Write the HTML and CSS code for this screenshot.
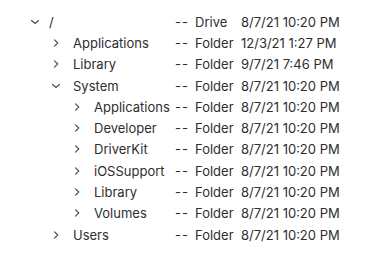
FILE: index.html
```html
<!DOCTYPE html>
<html>
<head>
<meta charset="utf-8">
<link rel="stylesheet" href="styles.css">
</head>
<body>
<ul class="tree">
  <li class="row l0"><span class="name"><svg class="chev" viewBox="0 0 10 10"><polyline points="1.5,3.5 5,6.5 8.5,3.5"/></svg><span class="label">/</span></span><span class="dash">--</span><span class="type">Drive</span><span class="date">8/7/21 10:20 PM</span></li>
  <li class="row l1"><span class="name"><svg class="chev" viewBox="0 0 10 10"><polyline points="3.5,1.8 6.8,5 3.5,8.2"/></svg><span class="label">Applications</span></span><span class="dash">--</span><span class="type">Folder</span><span class="date">12/3/21 1:27 PM</span></li>
  <li class="row l1"><span class="name"><svg class="chev" viewBox="0 0 10 10"><polyline points="3.5,1.8 6.8,5 3.5,8.2"/></svg><span class="label">Library</span></span><span class="dash">--</span><span class="type">Folder</span><span class="date">9/7/21 7:46 PM</span></li>
  <li class="row l1"><span class="name"><svg class="chev" viewBox="0 0 10 10"><polyline points="1.5,3.5 5,6.5 8.5,3.5"/></svg><span class="label">System</span></span><span class="dash">--</span><span class="type">Folder</span><span class="date">8/7/21 10:20 PM</span></li>
  <li class="row l2"><span class="name"><svg class="chev" viewBox="0 0 10 10"><polyline points="3.5,1.8 6.8,5 3.5,8.2"/></svg><span class="label">Applications</span></span><span class="dash">--</span><span class="type">Folder</span><span class="date">8/7/21 10:20 PM</span></li>
  <li class="row l2"><span class="name"><svg class="chev" viewBox="0 0 10 10"><polyline points="3.5,1.8 6.8,5 3.5,8.2"/></svg><span class="label">Developer</span></span><span class="dash">--</span><span class="type">Folder</span><span class="date">8/7/21 10:20 PM</span></li>
  <li class="row l2"><span class="name"><svg class="chev" viewBox="0 0 10 10"><polyline points="3.5,1.8 6.8,5 3.5,8.2"/></svg><span class="label">DriverKit</span></span><span class="dash">--</span><span class="type">Folder</span><span class="date">8/7/21 10:20 PM</span></li>
  <li class="row l2"><span class="name"><svg class="chev" viewBox="0 0 10 10"><polyline points="3.5,1.8 6.8,5 3.5,8.2"/></svg><span class="label">iOSSupport</span></span><span class="dash">--</span><span class="type">Folder</span><span class="date">8/7/21 10:20 PM</span></li>
  <li class="row l2"><span class="name"><svg class="chev" viewBox="0 0 10 10"><polyline points="3.5,1.8 6.8,5 3.5,8.2"/></svg><span class="label">Library</span></span><span class="dash">--</span><span class="type">Folder</span><span class="date">8/7/21 10:20 PM</span></li>
  <li class="row l2"><span class="name"><svg class="chev" viewBox="0 0 10 10"><polyline points="3.5,1.8 6.8,5 3.5,8.2"/></svg><span class="label">Volumes</span></span><span class="dash">--</span><span class="type">Folder</span><span class="date">8/7/21 10:20 PM</span></li>
  <li class="row l1"><span class="name"><svg class="chev" viewBox="0 0 10 10"><polyline points="3.5,1.8 6.8,5 3.5,8.2"/></svg><span class="label">Users</span></span><span class="dash">--</span><span class="type">Folder</span><span class="date">8/7/21 10:20 PM</span></li>
</ul>
</body>
</html>
```
FILE: styles.css
```css
html, body {
  margin: 0;
  padding: 0;
  background: #ffffff;
}
body {
  font-family: Inter, "Noto Sans", sans-serif;
  font-size: 13px;
  color: #2e2e2e;
}
.tree {
  list-style: none;
  margin: 0;
  padding: 11px 0 0 30px;
}
.row {
  display: grid;
  grid-template-columns: 145px 20px 46px auto;
  height: 21.3px;
  align-items: center;
  white-space: nowrap;
}
.name {
  display: flex;
  align-items: center;
}
.l1 .name { padding-left: 21px; }
.l2 .name { padding-left: 42px; }
.chev {
  width: 10px;
  height: 10px;
  margin-right: 12px;
  flex: none;
}
.l0 .chev { margin-right: 8px; }
.chev polyline {
  fill: none;
  stroke: #4a4a4a;
  stroke-width: 1.1;
  stroke-linecap: round;
  stroke-linejoin: round;
}
.label {
  display: block;
}
.l0 .label { padding-left: 1px; }
.dash {
  letter-spacing: 1px;
}
```
